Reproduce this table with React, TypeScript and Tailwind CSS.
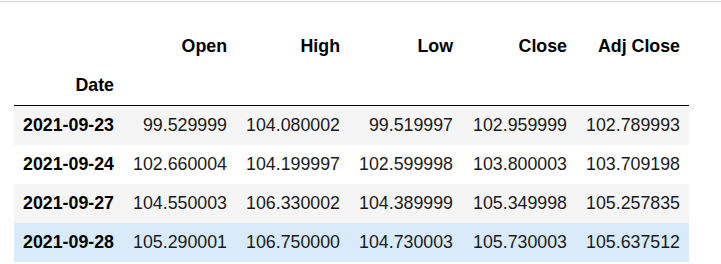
const columns = ["Open", "High", "Low", "Close", "Adj Close"];

const rows = [
  { date: "2021-09-23", values: ["99.529999", "104.080002", "99.519997", "102.959999", "102.789993"] },
  { date: "2021-09-24", values: ["102.660004", "104.199997", "102.599998", "103.800003", "103.709198"] },
  { date: "2021-09-27", values: ["104.550003", "106.330002", "104.389999", "105.349998", "105.257835"] },
  { date: "2021-09-28", values: ["105.290001", "106.750000", "104.730003", "105.730003", "105.637512"] },
];

const rowBg = ["bg-[#f5f5f5]", "bg-white", "bg-[#f5f5f5]", "bg-[#d9ebfb]"];

export default function App() {
  return (
    <div className="w-[721px] h-[264px] bg-white overflow-hidden font-['Liberation_Sans',Arial,sans-serif] text-[17.8px] text-[#1a1a1a]">
      <div className="mt-px h-px bg-[#d2d2d2]" />
      <table className="ml-[14px] mt-[25px] border-separate border-spacing-0 table-fixed w-[675px]">
        <colgroup>
          <col className="w-[109px]" />
          <col className="w-[113px]" />
          <col className="w-[113px]" />
          <col className="w-[113px]" />
          <col className="w-[114px]" />
          <col className="w-[113px]" />
        </colgroup>
        <thead>
          <tr className="h-[39px]">
            <th className="p-0" />
            {columns.map((c) => (
              <th key={c} className="px-[9px] py-0 text-right font-bold text-black">
                {c}
              </th>
            ))}
          </tr>
          <tr className="h-[40px]">
            <th className="px-[9px] py-0 text-right font-bold text-black border-b border-black">Date</th>
            {columns.map((c) => (
              <th key={c} className="p-0 border-b border-black" />
            ))}
          </tr>
        </thead>
        <tbody>
          {rows.map((r, i) => (
            <tr key={r.date} className={`h-[39px] ${rowBg[i]}`}>
              <th className="px-[9px] py-0 text-right font-bold text-black">{r.date}</th>
              {r.values.map((v, j) => (
                <td key={j} className="px-[9px] py-0 text-right">
                  {v}
                </td>
              ))}
            </tr>
          ))}
        </tbody>
      </table>
    </div>
  );
}
